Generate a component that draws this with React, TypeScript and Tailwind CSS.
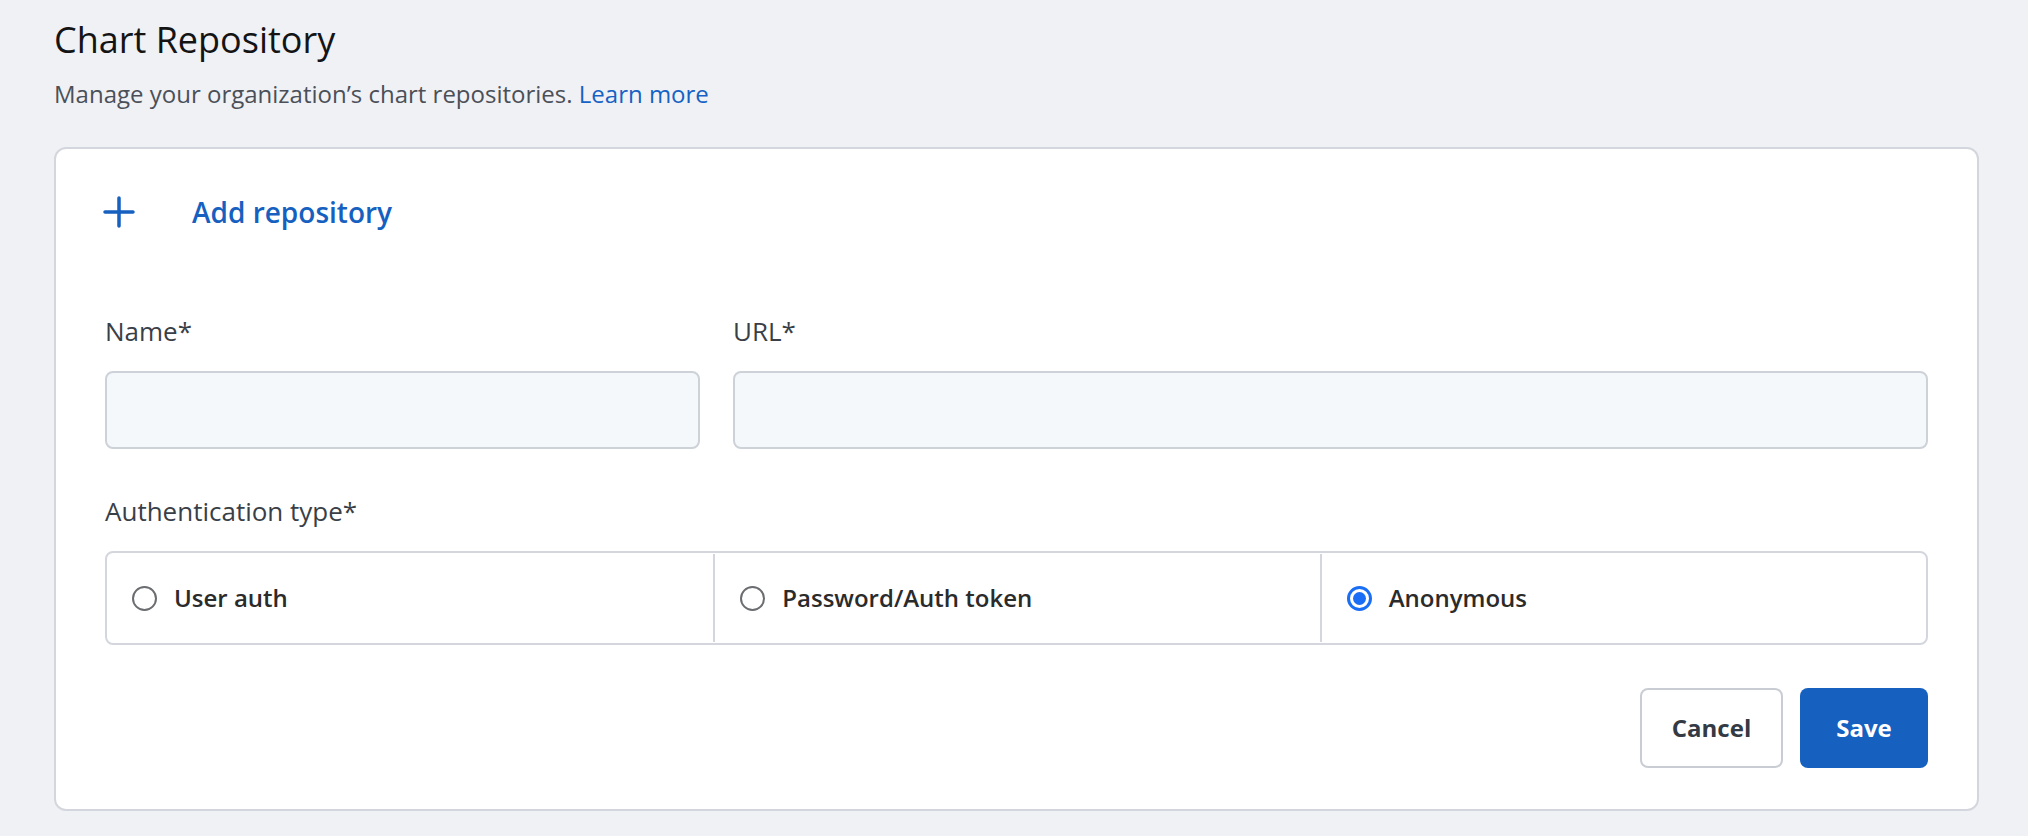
import { useState } from "react";

const font = { fontFamily: '"Open Sans", "Noto Sans", sans-serif' };

type AuthType = "user" | "token" | "anonymous";

const authOptions: { id: AuthType; label: string }[] = [
  { id: "user", label: "User auth" },
  { id: "token", label: "Password/Auth token" },
  { id: "anonymous", label: "Anonymous" },
];

function Radio({ checked }: { checked: boolean }) {
  if (checked) {
    return (
      <span className="flex h-[25px] w-[25px] shrink-0 items-center justify-center rounded-full border-[3px] border-[#1a6ef5]">
        <span className="h-[13px] w-[13px] rounded-full bg-[#1a6ef5]" />
      </span>
    );
  }
  return (
    <span className="h-[25px] w-[25px] shrink-0 rounded-full border-2 border-[#6b6d70]" />
  );
}

export default function App() {
  const [auth, setAuth] = useState<AuthType>("anonymous");

  return (
    <div
      className="min-h-screen w-full bg-[#f0f1f5] pl-[54px] pt-[18px]"
      style={font}
    >
      {/* Header */}
      <h1 className="text-[36px] leading-[44px] font-normal text-[#141414]">
        Chart Repository
      </h1>
      <p className="mt-[16px] text-[24px] leading-[32px] text-[#4b5058]">
        Manage your organization’s chart repositories.{" "}
        <a href="#" className="text-[#1662c4]">
          Learn more
        </a>
      </p>

      {/* Card */}
      <div className="mt-[37px] w-[1925px] rounded-[12px] border-2 border-[#d3d7dd] bg-white px-[49px] pt-[39px] pb-[41px]">
        <button className="flex h-[48px] items-center text-[#1660c0]">
          <svg width="32" height="32" viewBox="0 0 32 32" className="-ml-[2px]">
            <path
              d="M16 2v28M2 16h28"
              stroke="currentColor"
              strokeWidth="3.5"
              strokeLinecap="round"
            />
          </svg>
          <span className="ml-[57px] text-[28px] font-semibold">
            Add repository
          </span>
        </button>

        {/* Name / URL */}
        <div className="mt-[79px] grid grid-cols-[595px_1fr] gap-x-[33px]">
          <div>
            <label className="block text-[26px] leading-[32px] text-[#3a3f47]">
              Name*
            </label>
            <input className="mt-[24px] h-[78px] w-full rounded-[8px] border-2 border-[#cdd2d9] bg-[#f5f8fb] px-4 text-[22px] outline-none" />
          </div>
          <div>
            <label className="block text-[26px] leading-[32px] text-[#3a3f47]">
              URL*
            </label>
            <input className="mt-[24px] h-[78px] w-full rounded-[8px] border-2 border-[#cdd2d9] bg-[#f5f8fb] px-4 text-[22px] outline-none" />
          </div>
        </div>

        {/* Authentication type */}
        <div className="mt-[46px] text-[26px] leading-[32px] text-[#3a3f47]">
          Authentication type*
        </div>
        <div className="mt-[24px] grid h-[94px] grid-cols-3 rounded-[8px] border-2 border-[#d3d7dd]">
          {authOptions.map((opt, i) => (
            <button
              key={opt.id}
              onClick={() => setAuth(opt.id)}
              className={
                i === 0
                  ? "flex items-center gap-[17px] pl-[25px]"
                  : "my-[1px] flex items-center gap-[17px] border-l-2 border-[#d3d7dd] pl-[25px]"
              }
            >
              <Radio checked={auth === opt.id} />
              <span className="text-[24px] font-semibold text-[#2b2b2b]">
                {opt.label}
              </span>
            </button>
          ))}
        </div>

        {/* Actions */}
        <div className="mt-[43px] flex justify-end gap-[17px]">
          <button className="h-[80px] w-[143px] rounded-[8px] border-2 border-[#c9cdd3] bg-white text-[24px] font-bold text-[#333a44]">
            Cancel
          </button>
          <button className="h-[80px] w-[128px] rounded-[8px] bg-[#1660c0] text-[24px] font-bold text-white">
            Save
          </button>
        </div>
      </div>
    </div>
  );
}
